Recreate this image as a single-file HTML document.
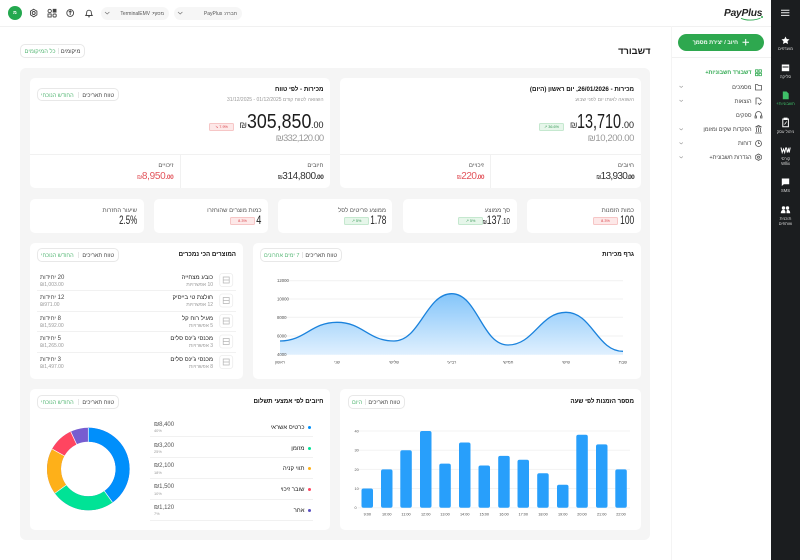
<!DOCTYPE html>
<html lang="he" dir="rtl"><head><meta charset="utf-8"><title>דשבורד</title>
<style>
*{box-sizing:border-box}
html,body{margin:0;padding:0;width:800px;height:560px;overflow:hidden;background:#fff;font-family:"Liberation Sans","DejaVu Sans",sans-serif;color:#1c1c1c}
.a{position:absolute}
.t{position:absolute;white-space:nowrap;line-height:10px;height:10px;direction:rtl;margin-top:.8px}
.big{margin-top:0}
.card{position:absolute;background:#fff;border-radius:5px}
.pill{position:absolute;height:13.5px;border:1px solid #e8e8e8;border-radius:5px;background:#fff;white-space:nowrap;font-size:5.6px;line-height:14px;color:#444;display:flex;justify-content:space-between;padding:0 3.5px;direction:rtl}
.pill i{font-style:normal;color:#58b877}
.pill b{font-weight:400;width:1px;background:#e6e6e6;height:6px;margin-top:3px}
.h{font-size:6.2px;font-weight:700;color:#111}
.badge{position:absolute;width:25px;height:8px;border-radius:1.5px;font-size:3.8px;line-height:6.5px;text-align:center;direction:ltr}
.g{background:#e6f6ea;border:1px solid #c5e8cf;color:#3a9a58}
.r{background:#fde8e8;border:1px solid #f6c6c6;color:#d9434a}
.lb{font-size:6px;color:#555}
.sm{font-size:5px;color:#999}
.hr{position:absolute;height:1px;background:#f1f1f1}
.big{font-size:20px;color:#1c1c1c;direction:ltr}
.big span{display:inline-block;transform-origin:left center}
.big small{font-size:9px}
.big u{text-decoration:none;font-size:9px;color:#444}
.v{font-size:10px;direction:ltr;color:#333}
.v small{font-size:6.5px;font-weight:700}
.v u{text-decoration:none;font-size:6px}
.red,.red u{color:#e2545b}
.s{font-size:11.5px;direction:ltr;color:#222;transform-origin:right center}
.m{font-size:5.6px;color:#444;font-weight:400}
.rl{position:absolute;width:29px;left:771px;text-align:center;color:#d8d8d8;font-size:4.2px;line-height:5px;direction:rtl}
svg{position:absolute;overflow:visible}
</style></head><body>

<!-- top bar -->
<div class="hr" style="left:0;top:26px;width:771px"></div>
<div class="a" style="left:8px;top:6px;width:14px;height:14px;border-radius:50%;background:#24a84f;color:#fff;font-size:5px;line-height:14px;text-align:center;font-weight:700">מ</div>
<svg style="left:0;top:0" width="100" height="26" fill="none" stroke="#444" stroke-width=".9">
<path d="M33.7 9.2l3.2 1.9v3.8l-3.2 1.9-3.2-1.900v-3.800z"/><circle cx="33.7" cy="13" r="1.5"/>
<circle cx="49.700" cy="11" r="1.700"/><rect x="53.200" y="9.300" width="2.800" height="2.800" fill="#444"/><rect x="48" y="14" width="3.200" height="3"/><rect x="53" y="14" width="3.200" height="3" rx="1"/>
<circle cx="70.200" cy="13" r="3.400"/><path d="M70.200 15v-4M68.800 12.200l1.400-1.400 1.400 1.400"/>
<path d="M85.800 15.500c.9-1 .9-2 .9-3a2.300 2.300 0 0 1 4.600 0c0 1 0 2 .9 3zM88 16.800h2"/>
</svg>
<div class="a" style="left:101px;top:6.500px;width:68px;height:13px;border-radius:7px;background:#f6f6f6"></div>
<div class="a" style="left:174px;top:6.500px;width:68px;height:13px;border-radius:7px;background:#f6f6f6"></div>
<svg style="left:0;top:0" width="200" height="26" fill="none" stroke="#777" stroke-width=".7"><path d="M105 12l2.200 2 2.200-2M178 12l2.200 2 2.200-2"/></svg>
<div class="t" style="right:636px;top:8px;font-size:5px;color:#555">מסוף: TerminalEMV</div>
<div class="t" style="right:563px;top:8px;font-size:5px;color:#555">חברה: PayPlus</div>

<!-- logo -->
<div class="t" style="left:724px;top:7px;font-size:10.2px;line-height:12px;height:12px;font-weight:700;font-style:italic;color:#222;direction:ltr;letter-spacing:-.2px">PayPlus</div>
<svg style="left:0;top:0" width="800" height="30" fill="none" stroke="#2ea84f" stroke-width=".9"><path d="M741 18.300c5 2.400 14 2.400 19.500-.3"/></svg>
<div class="a" style="left:760.500px;top:16px;width:2px;height:2px;background:#2ea84f;border-radius:50%"></div>

<!-- sidebar -->
<div class="hr" style="left:671px;top:26px;width:100px"></div>
<div class="hr" style="left:671px;top:57px;width:100px"></div>
<div class="a" style="left:671px;top:26px;width:1px;height:534px;background:#f4f4f4"></div>
<div class="a" style="left:678px;top:33.500px;width:86px;height:17.500px;border-radius:9px;background:#2ea84f;color:#fff;font-size:5.500px;line-height:19px;font-weight:700;text-align:right;padding-right:26px;white-space:nowrap">חיוב / יצירת מסמך</div>
<svg style="left:0;top:0" width="800" height="60" fill="none" stroke="#fff" stroke-width="1"><path d="M742.500 42.300h6.500M745.700 39v6.500"/></svg>

<div class="t m" style="right:48.500px;top:67.500px;color:#2ea84f;font-weight:700;font-size:5.400px">דשבורד חשבוניות+</div>
<div class="t m" style="right:48.500px;top:82px">מסמכים</div>
<div class="t m" style="right:48.500px;top:96px">הוצאות</div>
<div class="t m" style="right:48.500px;top:110px">ספקים</div>
<div class="t m" style="right:48.500px;top:124px">הפקדות שקים ומזומן</div>
<div class="t m" style="right:48.500px;top:138px">דוחות</div>
<div class="t m" style="right:48.500px;top:152px">הגדרות חשבונית+</div>
<svg style="left:0;top:0" width="800" height="170" fill="none" stroke="#555" stroke-width=".8">
<g stroke="#2ea84f"><rect x="755.500" y="69.800" width="2.400" height="2.400"/><rect x="759" y="69.800" width="2.400" height="2.400"/><rect x="755.500" y="73.300" width="2.400" height="2.400"/><rect x="759" y="73.300" width="2.400" height="2.400"/></g>
<path d="M755.500 90v-5.500h2l1 1h3v4.500z"/>
<path d="M756 104.500v-6.500h3l2 2v1M758 103l1.500 1.500 2-2"/>
<path d="M755.500 116v-1.500a3 3 0 0 1 6 0v1.500M755 116h1.500v2h-1.500zM760.500 116h1.500v2h-1.500z"/>
<path d="M755 133h7M755.500 127l3-1.500 3 1.500zM756.500 128v4M758.500 128v4M760.500 128v4"/>
<circle cx="758.500" cy="143.500" r="3"/><path d="M758.500 141.500v2h1.500"/>
<path d="M758.500 154l2.800 1.600v3.200l-2.800 1.600-2.800-1.600v-3.200z"/><circle cx="758.500" cy="157.200" r="1"/>
<g stroke="#999" stroke-width=".6"><path d="M679.500 86l1.700 1.500 1.700-1.500M679.500 100l1.700 1.500 1.700-1.500M679.500 128.500l1.700 1.500 1.700-1.500M679.500 142.500l1.700 1.500 1.700-1.500M679.500 156.500l1.700 1.500 1.700-1.500"/></g>
</svg>

<!-- rail -->
<div class="a" style="left:771px;top:0;width:29px;height:560px;background:#1b1d1f"></div>
<svg style="left:0;top:0" width="800" height="240" fill="#fff" stroke="none">
<path d="M781 10.200h8.400M781 12.800h8.400M781 15.400h8.400" fill="none" stroke="#f0f0f0" stroke-width="1"/>
<path d="M785.500 36.500l1.200 2.500 2.800.4-2 1.900.5 2.700-2.500-1.300-2.500 1.300.5-2.700-2-1.900 2.800-.4z"/>
<path d="M781.800 64.500h7.400v6.700h-7.400z"/><path d="M782.500 66.500h6v1h-6z" fill="#1b1d1f"/>
<path d="M782.800 91.500h3.800l2.100 2.100v5.700h-5.900z" fill="#3fbf68"/>
<path d="M782.800 119h5.600v7.800h-5.600z" fill="none" stroke="#fff" stroke-width="1"/><path d="M784 118h3.200v1.600H784zM784.500 124.500l2.200-3" stroke="#fff" stroke-width=".7"/>
<path d="M781 147.500l1.200 5 1.300-3.500 1.200 3.500 1.100-5M786.500 147.500l.8 5 1.200-3.500 .7 3.500 1-5" fill="none" stroke="#fff" stroke-width="1"/>
<path d="M781.800 178.500h7.400v5.800h-5.400l-2 1.700z"/>
<circle cx="783.500" cy="208" r="1.700"/><circle cx="787.500" cy="208" r="1.700"/><path d="M780.800 213.300c0-2.500 1.300-3.400 2.700-3.400s2 .8 2 3.400zM786.500 213.300c0-2.500 .2-3.400 1.200-3.400 1.300 0 2.500 1 2.500 3.400z"/>
</svg>
<div class="rl" style="top:46px">מועדפים</div>
<div class="rl" style="top:73.500px">סליקה</div>
<div class="rl" style="top:101px;color:#3fbf68">חשבוניות+</div>
<div class="rl" style="top:128.500px">ניהול עסק</div>
<div class="rl" style="top:155.500px">קורסי<br>Wllix</div>
<div class="rl" style="top:188px">SMS</div>
<div class="rl" style="top:216px">תוכנית<br>שותפים</div>

<!-- header -->
<div class="t" style="right:149.500px;top:45px;font-size:9.300px;font-weight:700;color:#1c1c1c">דשבורד</div>
<div class="pill" style="left:20px;top:44px;width:65px;font-size:5.800px"><span>מיקומים</span><b></b><i>כל המיקומים</i></div>

<!-- panel -->
<div class="a" style="left:20px;top:68px;width:630px;height:472px;background:#f5f5f5;border-radius:6px"></div>

<!-- top right card -->
<div class="card" style="left:340px;top:78px;width:301px;height:110px"></div>
<div class="t h" style="right:166px;top:84.500px">מכירות - 26/01/2026, יום ראשון (היום)</div>
<div class="t sm" style="right:166px;top:94.500px">השוואה לאותו יום לפני שבוע</div>
<div class="t big" style="right:166px;top:117px"><u>₪</u><span style="width:44px;transform:scaleX(.72)">13,710</span><small>.00</small></div>
<div class="t" style="right:166px;top:133.500px;font-size:9.500px;color:#9a9a9a;direction:ltr;letter-spacing:-.4px">₪10,200.00</div>
<div class="badge g" style="left:539px;top:122.500px">↗ 36.6%</div>
<div class="hr" style="left:340px;top:154px;width:301px"></div>
<div class="a" style="left:490px;top:154px;width:1px;height:34px;background:#f1f1f1"></div>
<div class="t lb" style="right:166px;top:160.500px">חיובים</div>
<div class="t v" style="right:166px;top:171.500px;letter-spacing:-.7px"><u>₪</u>13,930<small>.00</small></div>
<div class="t lb" style="right:316px;top:160.500px">זיכויים</div>
<div class="t v red" style="right:316px;top:171.500px;letter-spacing:-.5px"><u>₪</u>220<small>.00</small></div>

<!-- top left card -->
<div class="card" style="left:30px;top:78px;width:300px;height:110px"></div>
<div class="t h" style="right:476.500px;top:84.500px">מכירות - לפי טווח</div>
<div class="t sm" style="right:476.500px;top:94.500px">השוואה לטווח קודם 01/12/2025 - 31/12/2025</div>
<div class="t big" style="right:476.500px;top:117px"><u>₪</u><span style="width:64px;transform:scaleX(.89)">305,850</span><small>.00</small></div>
<div class="t" style="right:476.500px;top:133.500px;font-size:9.500px;color:#9a9a9a;direction:ltr;letter-spacing:-.7px">₪332,120.00</div>
<div class="badge r" style="left:209px;top:122.500px">↘ 7.9%</div>
<div class="pill" style="left:36.500px;top:87.500px;width:82px"><span>טווח תאריכים</span><b></b><i>החודש הנוכחי</i></div>
<div class="hr" style="left:30px;top:154px;width:300px"></div>
<div class="a" style="left:180px;top:154px;width:1px;height:34px;background:#f1f1f1"></div>
<div class="t lb" style="right:476.500px;top:160.500px">חיובים</div>
<div class="t v" style="right:476.500px;top:171.500px;letter-spacing:-.4px"><u>₪</u>314,800<small>.00</small></div>
<div class="t lb" style="right:626.500px;top:160.500px">זיכויים</div>
<div class="t v red" style="right:626.500px;top:171.500px;letter-spacing:-.3px"><u>₪</u>8,950<small>.00</small></div>

<!-- stats -->
<div class="card" style="left:527px;top:198.500px;width:114px;height:34.500px"></div>
<div class="card" style="left:403px;top:198.500px;width:114px;height:34.500px"></div>
<div class="card" style="left:278px;top:198.500px;width:114px;height:34.500px"></div>
<div class="card" style="left:154px;top:198.500px;width:114px;height:34.500px"></div>
<div class="card" style="left:30px;top:198.500px;width:114px;height:34.500px"></div>
<div class="t lb" style="right:166px;top:205px">כמות הזמנות</div>
<div class="t s" style="right:166px;top:215.500px;transform:scaleX(.73)">100</div>
<div class="badge r" style="left:593px;top:217px">8.3%</div>
<div class="t lb" style="right:290px;top:205px">סך ממוצע</div>
<div class="t s" style="right:290px;top:215.500px;transform:scaleX(.76)"><span style="font-size:6.500px">₪</span>137<span style="font-size:8px">.10</span></div>
<div class="badge g" style="left:458px;top:217px">↗ 5%</div>
<div class="t lb" style="right:414px;top:205px">ממוצע פריטים לסל</div>
<div class="t s" style="right:414px;top:215.500px;transform:scaleX(.72)">1.78</div>
<div class="badge g" style="left:344px;top:217px">↗ 5%</div>
<div class="t lb" style="right:538.500px;top:205px">כמות מוצרים שהוחזרו</div>
<div class="t s" style="right:538.500px;top:215.500px;transform:scaleX(.8)">4</div>
<div class="badge r" style="left:230px;top:217px">8.3%</div>
<div class="t lb" style="right:663px;top:205px">שיעור החזרות</div>
<div class="t s" style="right:663px;top:215.500px;transform:scaleX(.69)">2.5%</div>

<!-- sales chart card -->
<div class="card" style="left:253px;top:243px;width:388px;height:136px"></div>
<div class="t h" style="right:166px;top:249.500px">גרף מכירות</div>
<div class="pill" style="left:259.500px;top:248px;width:82px"><span>טווח תאריכים</span><b></b><i>7 ימים אחרונים</i></div>
<svg style="left:0;top:0" width="800" height="400">
<defs><linearGradient id="ga" x1="0" y1="0" x2="0" y2="1" gradientUnits="objectBoundingBox"><stop offset="0" stop-color="#84c5fa"/><stop offset="1" stop-color="#e0f0fe"/></linearGradient></defs>
<g stroke="#f1f1f1" stroke-width="1"><path d="M280 280.700H623M280 299H623M280 317.300H623M280 336H623"/></g>
<path d="M280 341C305 341 311 322.300 337 322.300S368 341 394 341 426 293.700 451.700 293.700 482 345 508 345 540 312.300 566 312.300 597 351.300 623 351.300V354.700H280Z" fill="url(#ga)"/>
<path d="M280 341C305 341 311 322.300 337 322.300S368 341 394 341 426 293.700 451.700 293.700 482 345 508 345 540 312.300 566 312.300 597 351.300 623 351.300" fill="none" stroke="#1a82dc" stroke-width="1.300"/>
<g font-size="4.300" fill="#555" text-anchor="end" font-family="Liberation Sans,sans-serif">
<text x="277" y="282.200">12000</text><text x="277" y="300.500">10000</text><text x="277" y="319">8000</text><text x="277" y="337.500">6000</text><text x="277" y="356">4000</text></g>
<g font-size="4.200" fill="#555" text-anchor="middle" font-family="Liberation Sans,sans-serif">
<text x="280" y="363.500">ראשון</text><text x="337" y="363.500">שני</text><text x="394" y="363.500">שלישי</text><text x="451.700" y="363.500">רביעי</text><text x="508" y="363.500">חמישי</text><text x="566" y="363.500">שישי</text><text x="623" y="363.500">שבת</text></g>
</svg>

<!-- products card -->
<div class="card" style="left:30px;top:243px;width:213px;height:136px"></div>
<div class="t h" style="right:564px;top:249.500px">המוצרים הכי נמכרים</div>
<div class="pill" style="left:36.500px;top:248px;width:82px"><span>טווח תאריכים</span><b></b><i>החודש הנוכחי</i></div>
<div class="t" style="right:587px;top:272px;font-size:6px;color:#222">כובע מצחייה</div><div class="t sm" style="right:587px;top:279px">10 אפשרויות</div>
<div class="t" style="right:587px;top:292.500px;font-size:6px;color:#222">חולצת טי בייסיק</div><div class="t sm" style="right:587px;top:299.500px">12 אפשרויות</div>
<div class="t" style="right:587px;top:313px;font-size:6px;color:#222">מעיל רוח קל</div><div class="t sm" style="right:587px;top:320px">5 אפשרויות</div>
<div class="t" style="right:587px;top:333.500px;font-size:6px;color:#222">מכנסי ג'ינס סלים</div><div class="t sm" style="right:587px;top:340.500px">3 אפשרויות</div>
<div class="t" style="right:587px;top:354px;font-size:6px;color:#222">מכנסי ג'ינס סלים</div><div class="t sm" style="right:587px;top:361px">8 אפשרויות</div>
<div class="t" style="left:40px;top:272px;font-size:6px;color:#444">20 יחידות</div><div class="t sm" style="left:40px;top:279px;direction:ltr">₪1,003.00</div>
<div class="t" style="left:40px;top:292.500px;font-size:6px;color:#444">12 יחידות</div><div class="t sm" style="left:40px;top:299.500px;direction:ltr">₪971.00</div>
<div class="t" style="left:40px;top:313px;font-size:6px;color:#444">8 יחידות</div><div class="t sm" style="left:40px;top:320px;direction:ltr">₪1,592.00</div>
<div class="t" style="left:40px;top:333.500px;font-size:6px;color:#444">5 יחידות</div><div class="t sm" style="left:40px;top:340.500px;direction:ltr">₪1,265.00</div>
<div class="t" style="left:40px;top:354px;font-size:6px;color:#444">3 יחידות</div><div class="t sm" style="left:40px;top:361px;direction:ltr">₪1,497.00</div>
<div class="hr" style="left:37px;top:290px;width:199px"></div>
<div class="hr" style="left:37px;top:310.500px;width:199px"></div>
<div class="hr" style="left:37px;top:331px;width:199px"></div>
<div class="hr" style="left:37px;top:351.500px;width:199px"></div>
<svg style="left:0;top:0" width="300" height="380" fill="none">
<g stroke="#ececec" stroke-width=".8"><rect x="219.700" y="273.500" width="13" height="13" rx="2.500"/><rect x="219.700" y="294" width="13" height="13" rx="2.500"/><rect x="219.700" y="314.500" width="13" height="13" rx="2.500"/><rect x="219.700" y="335" width="13" height="13" rx="2.500"/><rect x="219.700" y="355.500" width="13" height="13" rx="2.500"/></g>
<g stroke="#b5b5b5" stroke-width=".7"><path d="M223.200 277h6v6h-6zM223.200 280h6"/><path d="M223.200 297.500h6v6h-6zM223.200 300.500h6"/><path d="M223.200 318h6v6h-6zM223.200 321h6"/><path d="M223.200 338.500h6v6h-6zM223.200 341.500h6"/><path d="M223.200 359h6v6h-6zM223.200 362h6"/></g>
</svg>

<!-- orders per hour -->
<div class="card" style="left:340px;top:389px;width:301px;height:141px"></div>
<div class="t h" style="right:166px;top:396px">מספר הזמנות לפי שעה</div>
<div class="pill" style="left:347.500px;top:395px;width:57px"><span>טווח תאריכים</span><b></b><i>היום</i></div>
<svg style="left:0;top:0" width="800" height="560" font-family="Liberation Sans,sans-serif">
<g stroke="#f3f3f3" stroke-width="1"><path d="M358 431H630M358 450.200H630M358 469.400H630M358 488.500H630M358 507.700H630"/></g>
<g fill="#289ffb">
<rect x="361.500" y="488.500" width="11.500" height="19.200" rx="2"/>
<rect x="381" y="469.400" width="11.500" height="38.300" rx="2"/>
<rect x="400.300" y="450.200" width="11.500" height="57.500" rx="2"/>
<rect x="420" y="431" width="11.500" height="76.700" rx="2"/>
<rect x="439.300" y="463.600" width="11.500" height="44.100" rx="2"/>
<rect x="459" y="442.500" width="11.500" height="65.200" rx="2"/>
<rect x="478.500" y="465.500" width="11.500" height="42.200" rx="2"/>
<rect x="498.200" y="455.900" width="11.500" height="51.800" rx="2"/>
<rect x="517.500" y="459.800" width="11.500" height="47.900" rx="2"/>
<rect x="537.200" y="473.200" width="11.500" height="34.500" rx="2"/>
<rect x="557" y="484.700" width="11.500" height="23" rx="2"/>
<rect x="576.300" y="434.800" width="11.500" height="72.900" rx="2"/>
<rect x="596" y="444.400" width="11.500" height="63.300" rx="2"/>
<rect x="615.300" y="469.400" width="11.500" height="38.300" rx="2"/>
</g>
<g font-size="3.800" fill="#555" text-anchor="end"><text x="354.500" y="432.500">40</text><text x="354.500" y="451.700">30</text><text x="354.500" y="470.900">20</text><text x="354.500" y="490">10</text><text x="354.500" y="509.200">0</text></g>
<g font-size="3.800" fill="#444" text-anchor="middle"><text x="367.300" y="515.500">9:00</text><text x="386.700" y="515.500">10:00</text><text x="406" y="515.500">11:00</text><text x="425.700" y="515.500">12:00</text><text x="445" y="515.500">13:00</text><text x="464.700" y="515.500">14:00</text><text x="484.300" y="515.500">15:00</text><text x="504" y="515.500">16:00</text><text x="523.300" y="515.500">17:00</text><text x="543" y="515.500">18:00</text><text x="562.700" y="515.500">19:00</text><text x="582" y="515.500">20:00</text><text x="601.700" y="515.500">21:00</text><text x="621" y="515.500">22:00</text></g>
</svg>

<!-- payments -->
<div class="card" style="left:30px;top:389px;width:300px;height:141px"></div>
<div class="t h" style="right:476.500px;top:396px">חיובים לפי אמצעי תשלום</div>
<div class="pill" style="left:36.500px;top:395px;width:82px"><span>טווח תאריכים</span><b></b><i>החודש הנוכחי</i></div>
<svg style="left:0;top:0" width="340" height="560" viewBox="0 0 340 560">
<g fill="none" stroke-width="14" transform="rotate(-90 88.300 469)">
<circle cx="88.300" cy="469" r="34.300" stroke="#775dd0"/>
<circle cx="88.300" cy="469" r="34.300" stroke="#008ffb" stroke-dasharray="86.200 129.300"/>
<circle cx="88.300" cy="469" r="34.300" stroke="#00e396" stroke-dasharray="53.900 161.600" stroke-dashoffset="-86.200"/>
<circle cx="88.300" cy="469" r="34.300" stroke="#feb019" stroke-dasharray="38.800 176.700" stroke-dashoffset="-140.100"/>
<circle cx="88.300" cy="469" r="34.300" stroke="#ff4560" stroke-dasharray="21.500 194" stroke-dashoffset="-178.900"/>
</g>
<g stroke="#fff" stroke-width=".7"><path d="M88.300 428v14M112.400 502.200L104.200 490.800M55.100 493.100L66.500 484.900M52.400 449.200L64.600 456M70.800 431.900L76.800 444.600"/></g>
</svg>
<div class="t" style="right:495.500px;top:422px;font-size:6px;color:#222">כרטיס אשראי</div>
<div class="t" style="right:495.500px;top:443px;font-size:6px;color:#222">מזומן</div>
<div class="t" style="right:495.500px;top:463.500px;font-size:6px;color:#222">תווי קניה</div>
<div class="t" style="right:495.500px;top:484.500px;font-size:6px;color:#222">שובר זיכוי</div>
<div class="t" style="right:495.500px;top:505px;font-size:6px;color:#222">אחר</div>
<div class="a" style="left:307.500px;top:425.500px;width:3px;height:3px;border-radius:50%;background:#008ffb"></div>
<div class="a" style="left:307.500px;top:446.500px;width:3px;height:3px;border-radius:50%;background:#00e396"></div>
<div class="a" style="left:307.500px;top:467px;width:3px;height:3px;border-radius:50%;background:#feb019"></div>
<div class="a" style="left:307.500px;top:488px;width:3px;height:3px;border-radius:50%;background:#ff4560"></div>
<div class="a" style="left:307.500px;top:508.500px;width:3px;height:3px;border-radius:50%;background:#5a4fc0"></div>
<div class="t" style="left:154px;top:419px;font-size:6px;color:#555;direction:ltr">₪8,400</div><div class="t" style="left:154px;top:425.500px;font-size:3.900px;color:#999;direction:ltr">40%</div>
<div class="t" style="left:154px;top:440px;font-size:6px;color:#555;direction:ltr">₪3,200</div><div class="t" style="left:154px;top:446.500px;font-size:3.900px;color:#999;direction:ltr">25%</div>
<div class="t" style="left:154px;top:460.500px;font-size:6px;color:#555;direction:ltr">₪2,100</div><div class="t" style="left:154px;top:467px;font-size:3.900px;color:#999;direction:ltr">18%</div>
<div class="t" style="left:154px;top:481.500px;font-size:6px;color:#555;direction:ltr">₪1,500</div><div class="t" style="left:154px;top:488px;font-size:3.900px;color:#999;direction:ltr">10%</div>
<div class="t" style="left:154px;top:502px;font-size:6px;color:#555;direction:ltr">₪1,120</div><div class="t" style="left:154px;top:508.500px;font-size:3.900px;color:#999;direction:ltr">7%</div>
<div class="hr" style="left:150px;top:436px;width:163px"></div>
<div class="hr" style="left:150px;top:457px;width:163px"></div>
<div class="hr" style="left:150px;top:478px;width:163px"></div>
<div class="hr" style="left:150px;top:498.500px;width:163px"></div>
<div class="hr" style="left:150px;top:520px;width:163px"></div>
</body></html>
